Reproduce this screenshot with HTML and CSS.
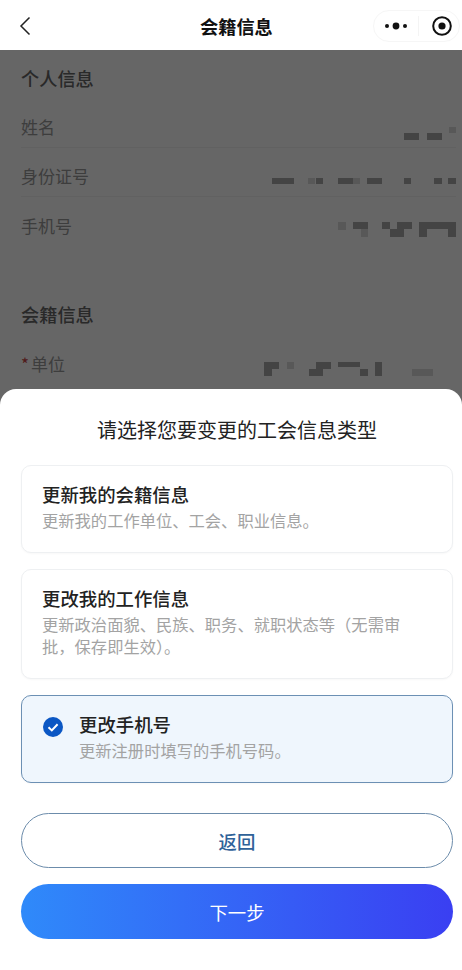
FILE: index.html
```html
<!DOCTYPE html>
<html lang="zh-CN">
<head>
    <meta charset="UTF-8">
    <meta name="viewport" content="width=device-width, initial-scale=1.0">
    <title>会籍信息</title>
    <link rel="stylesheet" href="styles.css">
</head>
<body>
    <header class="nav">
        <svg class="nav-back" width="12" height="20" viewBox="0 0 12 20">
            <path d="M10.5 1.5 L2 10 L10.5 18.5" fill="none" stroke="#222" stroke-width="1.5"/>
        </svg>
        <h1 class="nav-title">会籍信息</h1>
        <div class="capsule">
            <svg width="44" height="32" viewBox="0 0 44 32">
                <circle cx="13" cy="16" r="2" fill="#111"/>
                <circle cx="22" cy="16" r="3.4" fill="#111"/>
                <circle cx="31" cy="16" r="2" fill="#111"/>
            </svg>
            <span class="capsule-line"></span>
            <svg width="40" height="32" viewBox="0 0 40 32">
                <circle cx="23" cy="16" r="8.8" fill="none" stroke="#111" stroke-width="2"/>
                <circle cx="23" cy="16" r="3.6" fill="#111"/>
            </svg>
        </div>
    </header>

    <div class="content">
        <section class="section">
            <h2 class="section-title">个人信息</h2>
            <div class="row">
                <span class="row-label">姓名</span>
                <svg class="mask" width="52" height="24" viewBox="0 0 52 24">
                    <rect x="0" y="16" width="15" height="7"/>
                    <rect x="23" y="16" width="15" height="7"/>
                    <rect class="mask-faint" x="45" y="10" width="7" height="6"/>
                </svg>
            </div>
            <div class="row">
                <span class="row-label">身份证号</span>
                <svg class="mask" width="184" height="24" viewBox="0 0 184 24">
                    <rect x="0" y="12" width="22" height="6"/>
                    <rect class="mask-faint" x="36" y="12" width="7" height="6"/>
                    <rect x="44" y="12" width="7" height="6"/>
                    <rect x="66" y="12" width="15" height="6"/>
                    <rect class="mask-faint" x="81" y="12" width="7" height="6"/>
                    <rect x="95" y="12" width="15" height="6"/>
                    <rect x="132" y="12" width="7" height="6"/>
                    <rect x="162" y="12" width="8" height="6"/>
                    <rect x="176" y="12" width="8" height="6"/>
                </svg>
            </div>
            <div class="row row-last">
                <span class="row-label">手机号</span>
                <svg class="mask" width="118" height="24" viewBox="0 0 118 24">
                    <rect class="mask-faint" x="0" y="7" width="8" height="8"/>
                    <rect x="15" y="7" width="15" height="7"/>
                    <rect class="mask-faint" x="23" y="14" width="7" height="8"/>
                    <rect x="44" y="7" width="8" height="7"/>
                    <rect x="52" y="14" width="14" height="8"/>
                    <rect x="59" y="7" width="15" height="7"/>
                    <rect x="81" y="7" width="37" height="7"/>
                    <rect x="81" y="14" width="8" height="8"/>
                    <rect x="110" y="14" width="8" height="8"/>
                </svg>
            </div>
        </section>

        <section class="section section-next">
            <h2 class="section-title">会籍信息</h2>
            <div class="row row-last">
                <span class="row-label"><span class="required">*</span>单位</span>
                <svg class="mask" width="192" height="24" viewBox="0 0 192 24">
                    <rect x="0" y="9" width="15" height="7"/>
                    <rect x="0" y="16" width="8" height="7"/>
                    <rect class="mask-faint" x="23" y="9" width="7" height="7"/>
                    <rect x="52" y="9" width="15" height="7"/>
                    <rect x="45" y="16" width="14" height="7"/>
                    <rect x="74" y="9" width="22" height="5"/>
                    <rect x="96" y="16" width="8" height="7"/>
                    <rect x="111" y="9" width="7" height="14"/>
                    <rect class="mask-faint" x="148" y="16" width="21" height="7"/>
                </svg>
            </div>
        </section>
    </div>

    <div class="overlay"></div>

    <div class="sheet">
        <h2 class="sheet-title">请选择您要变更的工会信息类型</h2>

        <div class="option">
            <div class="option-text">
                <div class="option-title">更新我的会籍信息</div>
                <div class="option-desc">更新我的工作单位、工会、职业信息。</div>
            </div>
        </div>

        <div class="option">
            <div class="option-text">
                <div class="option-title">更改我的工作信息</div>
                <div class="option-desc">更新政治面貌、民族、职务、就职状态等（无需审批，保存即生效）。</div>
            </div>
        </div>

        <div class="option option-active">
            <svg class="option-check" width="20" height="20" viewBox="0 0 20 20">
                <circle cx="10" cy="10" r="10" fill="#0b57c4"/>
                <path d="M5.5 10.2 L8.8 13.4 L14.6 7.2" fill="none" stroke="#fff" stroke-width="2"/>
            </svg>
            <div class="option-text">
                <div class="option-title">更改手机号</div>
                <div class="option-desc">更新注册时填写的手机号码。</div>
            </div>
        </div>

        <button class="btn btn-back">返回</button>
        <button class="btn btn-next">下一步</button>
    </div>
</body>
</html>
```

FILE: styles.css
```css
* {
    box-sizing: border-box;
}
body {
    position: relative;
    width: 462px;
    height: 970px;
    margin: 0;
    overflow: hidden;
    background-color: #fff;
    color: #222;
    font-family: "Noto Sans CJK SC", "Noto Sans", sans-serif;
}
h1, h2 {
    margin: 0;
}
.nav {
    position: relative;
    z-index: 2;
    display: flex;
    align-items: center;
    justify-content: space-between;
    height: 50px;
    padding: 0 2px 0 19px;
    background-color: #fff;
}
.nav-back {
    margin-top: 2px;
}
.nav-title {
    position: absolute;
    left: 200px;
    top: 12px;
    font-size: 18.2px;
    line-height: 28px;
    font-weight: 700;
    color: #111;
}
.capsule {
    display: flex;
    align-items: center;
    height: 32px;
    margin-top: 1px;
    border: 1px solid #f6f6f6;
    border-radius: 16px;
}
.capsule-line {
    width: 1px;
    height: 20px;
    background-color: #f4f4f4;
}
.content {
    padding: 9px 6px 0 21px;
}
.section-next {
    margin-top: 49px;
}
.section-title {
    height: 40px;
    font-size: 18.2px;
    line-height: 38px;
    font-weight: 500;
    color: #666;
}
.row {
    display: flex;
    align-items: center;
    justify-content: space-between;
    height: 49px;
    padding-top: 7px;
    border-bottom: 1px solid #f2f2f2;
}
.row-last {
    border-bottom: none;
}
.row-label {
    font-size: 17px;
    color: #999;
}
.required {
    margin-right: 2px;
    color: #c94444;
}
.mask {
    flex-shrink: 0;
    margin-top: 4px;
    fill: #aaa;
}
.mask-faint {
    fill: #dcdcdc;
}
.overlay {
    position: absolute;
    top: 50px;
    left: 0;
    right: 0;
    bottom: 0;
    z-index: 1;
    background-color: rgba(0, 0, 0, 0.6);
}
.sheet {
    position: absolute;
    left: 0;
    right: 0;
    bottom: 0;
    z-index: 2;
    display: flex;
    flex-direction: column;
    height: 581px;
    padding: 27px 9px 0 21px;
    background-color: #fff;
    border-radius: 16px 16px 0 0;
}
.sheet-title {
    margin-bottom: 21px;
    font-size: 20px;
    line-height: 28px;
    font-weight: 400;
    text-align: center;
    color: #222;
}
.option {
    display: flex;
    align-items: flex-start;
    gap: 16px;
    margin-bottom: 16px;
    padding: 15px 20px 21px;
    background-color: #fff;
    border: 1px solid #eef0f2;
    border-radius: 10px;
    box-shadow: 0 1px 2px rgba(0, 0, 0, 0.03);
}
.option-active {
    margin-bottom: 30px;
    padding-left: 21px;
    background-color: #eff6fd;
    border-color: #6c90b4;
}
.option-check {
    flex-shrink: 0;
    margin-top: 6px;
}
.option-title {
    font-size: 18.4px;
    line-height: 26px;
    font-weight: 500;
    color: #222;
}
.option-desc {
    margin-top: 2px;
    font-size: 16.3px;
    line-height: 22px;
    color: #a3a3a3;
}
.btn {
    height: 55px;
    font-family: inherit;
    font-size: 18.4px;
    border-radius: 28px;
}
.btn-back {
    margin-bottom: 16px;
    background-color: #fff;
    border: 1px solid #6c8cab;
    font-weight: 500;
    color: #2f6299;
}
.btn-next {
    background: linear-gradient(90deg, #2f8afa, #3a3ff2);
    border: none;
    color: #fff;
}
```
